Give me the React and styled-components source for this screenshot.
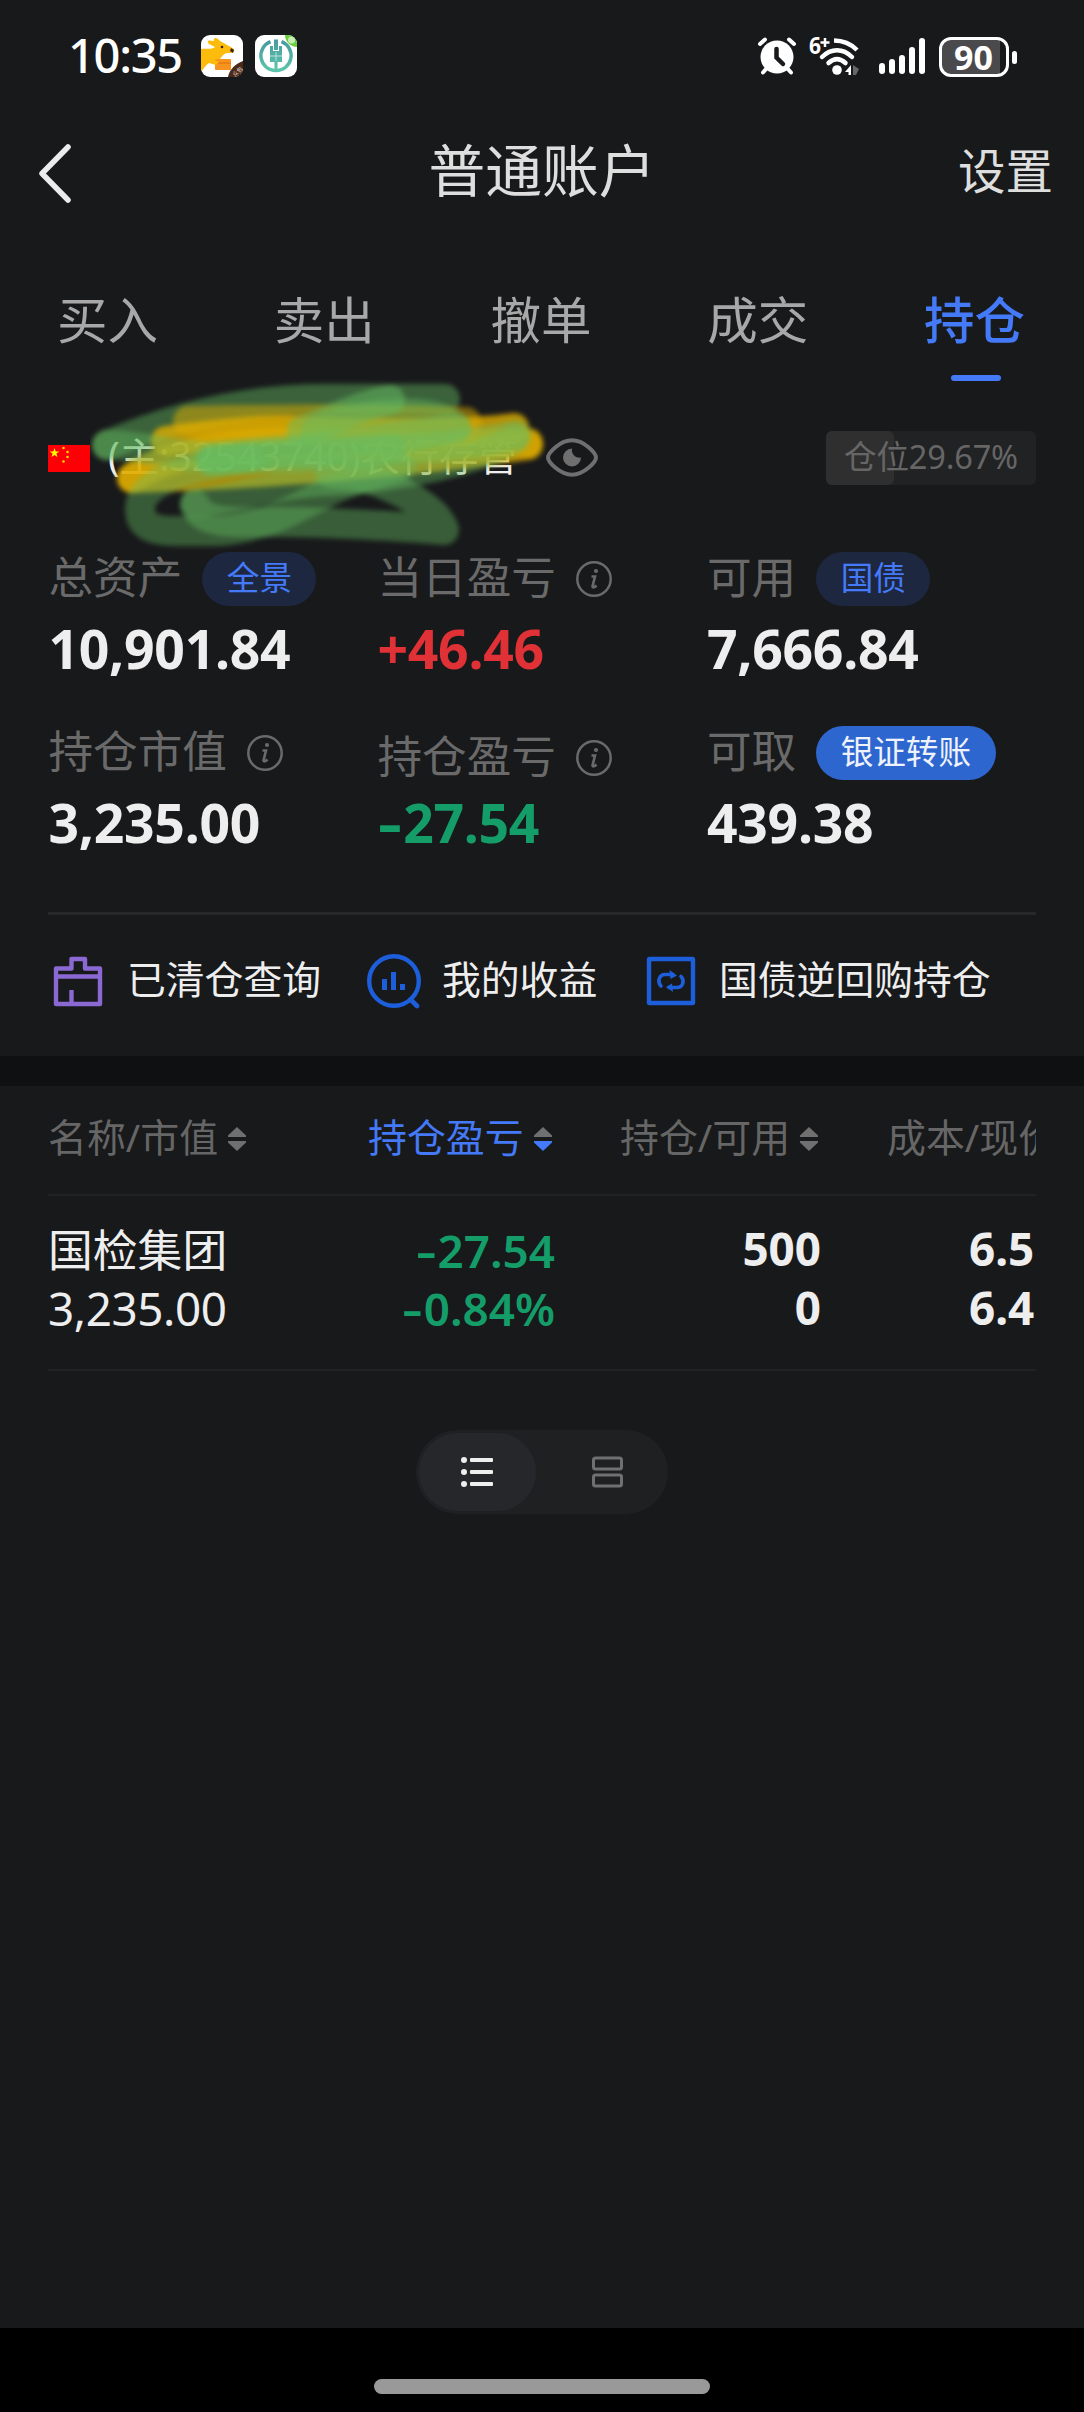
/* eslint-disable react/prop-types */
import styled, { createGlobalStyle } from "styled-components";

const GlobalStyle = createGlobalStyle`
  * {
    box-sizing: border-box;
  }

  body {
    margin: 0;
    background: #000;
    font-family: "Noto Sans", "Noto Sans CJK SC", sans-serif;
    color: #eee;
  }
`;

const Page = styled.div`
  display: flex;
  flex-direction: column;
  width: 1084px;
  height: 2412px;
  background: #18191b;
  overflow: hidden;
  white-space: nowrap;
`;

/* ---------- Status bar ---------- */

const StatusBar = styled.div`
  display: flex;
  align-items: center;
  height: 112px;
  padding: 0 67px 0 68px;
`;

const Time = styled.div`
  width: 133px;
  font-size: 47px;
  font-weight: 500;
  line-height: 60px;
  letter-spacing: -1.3px;
  transform: translateY(-1px);
  color: #fff;
`;

const AppIcons = styled.div`
  display: flex;
  gap: 12px;
  flex: 1;
`;

const StatusIcons = styled.div`
  display: flex;
  align-items: center;
`;

const Battery = styled.div`
  position: relative;
  display: flex;
  align-items: center;
  justify-content: center;
  width: 70px;
  height: 40px;
  margin: 2px 8px 0 14px;
  padding-right: 1px;
  border: 3px solid #fff;
  border-radius: 12px;
  background: linear-gradient(to right, #4a4a4c 90%, #18191b 90%);
  font-size: 34px;
  font-weight: 700;
  line-height: 34px;
  color: #fff;

  &::after {
    content: "";
    position: absolute;
    right: -11px;
    top: 11px;
    width: 5px;
    height: 13px;
    border-radius: 3px;
    background: #fff;
  }
`;

/* ---------- Header + tabs ---------- */

const Header = styled.div`
  display: grid;
  grid-template-columns: 1fr auto 1fr;
  align-items: center;
  height: 118px;
  padding: 0 31px 0 36px;
  color: #dedede;
`;

const Title = styled.div`
  margin-left: -5px;
  font-size: 56.8px;
  line-height: 70px;
  transform: translateY(-1px);
`;

const Settings = styled.div`
  justify-self: end;
  font-size: 47.5px;
  line-height: 60px;
`;

const Tabs = styled.div`
  display: grid;
  grid-template-columns: repeat(5, 1fr);
  height: 155px;
  padding-top: 60px;
`;

const Tab = styled.div`
  display: flex;
  flex-direction: column;
  align-items: center;
  gap: 25px;
  font-size: 50.5px;
  font-weight: ${({ $active }) => ($active ? 500 : 400)};
  line-height: 60px;
  color: ${({ $active }) => ($active ? "#447af7" : "#a8a8a8")};

  span {
    margin-right: 2px;
  }

  &::after {
    content: "";
    width: 50px;
    height: 6px;
    border-radius: 3px;
    background: ${({ $active }) => ($active ? "#447af7" : "transparent")};
  }
`;

/* ---------- Account ---------- */

const AccountRow = styled.div`
  position: relative;
  display: flex;
  align-items: center;
  height: 54px;
  margin: 46px 48px 67px;
`;

const AccountName = styled.div`
  width: 420px;
  margin: -4px 18px 0 18px;
  font-size: 39.2px;
  line-height: 54px;
  color: #eee;
`;

const Scribble = styled.svg`
  position: absolute;
  left: 42px;
  top: -56px;
`;

const Position = styled.div`
  width: 210px;
  height: 54px;
  margin-left: auto;
  border-radius: 6px;
  background: #212224;
  font-size: 32.6px;
  line-height: 51px;
  text-align: center;
  letter-spacing: -0.2px;
  color: #666;
`;

const PositionFill = styled.div`
  width: ${({ $width }) => $width};
  height: 54px;
  margin-bottom: -54px;
  border-radius: 6px;
  background: #2f2f30;
`;

const Stats = styled.div`
  display: grid;
  grid-template-columns: 329px 329.5px 1fr;
  row-gap: 47px;
  padding: 0 0 59px 48.5px;
`;

const StatLabel = styled.div`
  display: flex;
  align-items: center;
  gap: 20px;
  height: 54px;
  margin-top: ${({ $shift }) => $shift || 0};
  margin-bottom: ${({ $shift }) => ($shift ? `-${$shift}` : 0)};
  font-size: 44.6px;
  line-height: 50px;
  color: #6a6a6a;

  span {
    margin-top: -4px;
  }
`;

const StatValue = styled.div`
  margin-top: 13px;
  font-size: 53.5px;
  font-weight: 700;
  line-height: 60px;
  letter-spacing: -0.3px;
  color: ${({ $color }) => $color || "#eee"};
`;

// The hyphen of the font is short, numbers need a wider sign
const Sign = styled.span`
  display: inline-block;
  width: 0.48em;
  text-align: left;
  transform: scaleX(1.4);
  transform-origin: left center;
`;

const Pill = styled.div`
  height: 54px;
  padding: 0 24.5px;
  border-radius: 27px;
  background: ${({ $solid }) => ($solid ? "#2e66d0" : "#1e2740")};
  font-size: 32.6px;
  line-height: 51px;
  color: ${({ $solid }) => ($solid ? "#eef2fb" : "#447af7")};
`;

const Divider = styled.div`
  flex-shrink: 0;
  height: ${({ $height }) => $height};
  margin: 0 48px;
  background: ${({ $height }) => ($height === "3px" ? "#27282a" : "#212224")};
`;

const Shortcuts = styled.div`
  display: flex;
  align-items: center;
  height: 141px;
  padding: 0 0 9px 51px;
`;

const Shortcut = styled.div`
  display: flex;
  align-items: center;
  gap: 20px;
  width: ${({ $width }) => $width};
  font-size: 38.8px;
  line-height: 50px;
  color: #eee;

  span {
    margin-top: -5px;
  }
`;

const Band = styled.div`
  height: 30px;
  background: #0f1012;
`;

/* ---------- Holdings table ---------- */

const TableHead = styled.div`
  display: flex;
  align-items: center;
  height: 108px;
  margin: 0 48px;
  padding-bottom: 2px;
  overflow: hidden;
`;

const HeadCell = styled.div`
  display: flex;
  flex-shrink: 0;
  align-items: center;
  gap: 10px;
  width: ${({ $width }) => $width};
  font-size: 38.9px;
  line-height: 50px;
  color: ${({ $active }) => ($active ? "#447af7" : "#666")};

  span {
    margin-top: -4px;
  }
`;

const TableRow = styled.div`
  display: flex;
  height: 173px;
  margin: 0 48px;
  overflow: hidden;
`;

const Cell = styled.div`
  flex-shrink: 0;
  width: ${({ $width }) => $width};
  padding-top: ${({ $top }) => $top || "23px"};
  margin-right: ${({ $after }) => $after || 0};
  font-size: 45.8px;
  font-weight: ${({ $weight }) => $weight || 600};
  line-height: ${({ $line }) => $line || "59px"};
  text-align: ${({ $align }) => $align || "right"};
  color: ${({ $color }) => $color || "#eee"};
`;

const StockName = styled.div`
  font-size: 44.8px;
`;

const StockAmount = styled.div`
  letter-spacing: -0.4px;
`;

/* ---------- View switch + home bar ---------- */

const ViewSwitch = styled.div`
  display: flex;
  align-self: center;
  width: 252px;
  height: 84px;
  margin: 59px 0 auto;
  padding: 3px;
  border-radius: 42px;
  background: #1f2022;
`;

const ViewOption = styled.div`
  display: flex;
  align-items: center;
  justify-content: center;
  width: ${({ $active }) => ($active ? "117px" : "129px")};
  padding-left: ${({ $active }) => ($active ? 0 : "13px")};
  padding-right: ${({ $active }) => ($active ? "2px" : 0)};
  border-radius: 39px;
  background: ${({ $active }) => ($active ? "#26272b" : "transparent")};
`;

const HomeBar = styled.div`
  display: flex;
  justify-content: center;
  height: 84px;
  padding-top: 51px;
  background: #000;

  &::after {
    content: "";
    width: 336px;
    height: 15px;
    border-radius: 8px;
    background: #999;
  }
`;

/* ---------- Icons ---------- */

const KangarooIcon = () => (
  <svg width="42" height="42" viewBox="0 0 42 42">
    <defs>
      <clipPath id="kangaroo">
        <rect width="42" height="42" rx="9" />
      </clipPath>
    </defs>
    <g clipPath="url(#kangaroo)">
      <rect width="42" height="42" fill="#fff" />
      <path
        d="M0 14C5 13 10 15 14 12L8 9C5 5 8 5 13 6C12 2 16 2 19 6C23 8 28 11 33 14C34 18 31 18 26 18C22 19 21 22 18 25L16 30L8 28C3 31 3 35 0 36Z"
        fill="#fdbb0c"
      />
      <circle cx="21" cy="12" r="1.3" fill="#3c2415" />
      <path d="M30 13L33 15L32 18L29 16Z" fill="#3c2415" />
      <rect x="14" y="24" width="16" height="11" rx="1" fill="#f7931e" />
      <path d="M14 28H30" stroke="#e0700c" strokeWidth="1.2" />
      <path d="M12 24L18 27L15 30L9 28Z" fill="#fdbb0c" />
      <path d="M42 26C34 29 28 35 27 42H42Z" fill="#4c2a19" />
    </g>
    <text
      x="36.5"
      y="38.5"
      fontSize="5.5"
      textAnchor="middle"
      fill="#e8ddd5"
      transform="rotate(-45 36.5 36.5)"
    >
      众包
    </text>
  </svg>
);

const BankIcon = () => (
  <svg width="42" height="42" viewBox="0 0 42 42" fill="none">
    <defs>
      <linearGradient id="bank" x1="0" y1="0" x2="0" y2="1">
        <stop offset="0" stopColor="#469ba0" />
        <stop offset="1" stopColor="#5cc4ab" />
      </linearGradient>
      <clipPath id="bankClip">
        <rect width="42" height="42" rx="9" />
      </clipPath>
    </defs>
    <g clipPath="url(#bankClip)">
      <rect width="42" height="42" fill="#fff" />
      <path
        d="M15.5 6.6A15 15 0 0 0 21 35.6A15 15 0 0 0 26.5 6.6"
        stroke="url(#bank)"
        strokeWidth="3.4"
      />
      <path
        d="M15 11H18V16H24V11H27V27H22.5V35H19.5V27H15ZM19 4.5H23V15H19Z"
        fill="url(#bank)"
      />
      <path d="M15 21H27M21 17V26" stroke="#d6efe9" strokeWidth="0.8" />
      <path d="M30 0H42V12C36 12 30 7 30 0Z" fill="#69cf3f" />
      <circle cx="36.5" cy="5" r="3.5" fill="#c5f0b2" />
    </g>
  </svg>
);

const AlarmIcon = () => (
  <svg width="38" height="38" viewBox="0 0 38 38" strokeLinecap="round">
    <path
      d="M2 7L7 2.5M36 7L31 2.5M9 31L5 35.5M29 31L33 35.5"
      stroke="#fff"
      strokeWidth="4"
    />
    <circle cx="19" cy="20" r="16.5" fill="#fff" />
    <path
      d="M18.5 12V20.5L25 27"
      fill="none"
      stroke="#18191b"
      strokeWidth="4.5"
    />
  </svg>
);

const WifiBox = styled.div`
  display: flex;
  width: 52px;
  margin: 0 18px 0 13px;
`;

const WifiIcon = () => (
  <WifiBox>
    <svg
      width="52"
      height="42"
      viewBox="0 0 52 42"
      fill="none"
      stroke="#fff"
      strokeWidth="4.5"
      overflow="visible"
    >
      <path d="M25 5.5C34 5.5 42 9 48 15" />
      <path d="M13 22C22 13 34 13 43 22" strokeLinecap="round" />
      <path d="M19.5 28C25 23 31 23 36.5 28" strokeLinecap="round" />
      <circle cx="28" cy="35" r="4.8" fill="#fff" stroke="none" />
      <path d="M42 30V40H39.5V37H36Z" fill="#fff" stroke="none" />
      <path d="M44 30L50 34L47 40H44Z" fill="#666" stroke="none" />
      <path d="M16 3V12M11.5 7.5H20.5" strokeWidth="2.5" />
      <text
        x="0"
        y="19"
        fontSize="24"
        fontWeight="700"
        fill="#fff"
        stroke="none"
        textLength="12"
        lengthAdjust="spacingAndGlyphs"
      >
        6
      </text>
    </svg>
  </WifiBox>
);

const SignalIcon = () => (
  <svg width="46" height="36" viewBox="0 0 46 36" fill="#fff">
    <rect x="0" y="25" width="6" height="11" rx="3" />
    <rect x="10" y="21" width="6" height="15" rx="3" />
    <rect x="20" y="17" width="6" height="19" rx="3" />
    <rect x="30" y="9" width="6" height="27" rx="3" />
    <rect x="40" y="0" width="6" height="36" rx="3" />
  </svg>
);

const BackIcon = () => (
  <svg width="38" height="64" viewBox="0 0 38 64" fill="none">
    <path
      d="M32 8L6 34.5L32 61"
      stroke="#ececec"
      strokeWidth="5.5"
      strokeLinecap="round"
      strokeLinejoin="round"
    />
  </svg>
);

const starPoints = "0,-5 1.2,-1.6 4.8,-1.6 1.9,0.6 3,4 0,1.9 -3,4 -1.9,0.6 -4.8,-1.6 -1.2,-1.6";

const FlagIcon = () => (
  <svg width="42" height="27" viewBox="0 0 42 27">
    <rect width="42" height="27" fill="#fd0006" />
    <polygon points={starPoints} transform="translate(6.5 8)" fill="#ff0" />
    <g fill="#ffd400">
      <circle cx="15.5" cy="3" r="1.3" />
      <circle cx="19.5" cy="7" r="1.3" />
      <circle cx="19.5" cy="12" r="1.3" />
      <circle cx="15.5" cy="16.5" r="1.3" />
    </g>
  </svg>
);

const EyeIcon = () => (
  <svg width="52" height="40" viewBox="0 0 52 40" fill="none">
    <path
      d="M2 19.5C2 15 14 2.2 26 2.2C38 2.2 50 15 50 19.5C50 24 38 36.8 26 36.8C14 36.8 2 24 2 19.5Z"
      stroke="#6f6f6f"
      strokeWidth="4"
    />
    <path d="M26 10.5A9 9 0 1 0 35 19.5C30 20.5 25 16.5 26 10.5Z" fill="#6f6f6f" />
  </svg>
);

const InfoIcon = () => (
  <svg width="36" height="36" viewBox="0 0 36 36" fill="none">
    <circle cx="18" cy="18" r="16.7" stroke="#6a6a6a" strokeWidth="2.5" />
    <circle cx="20" cy="10" r="2.1" fill="#6a6a6a" />
    <path
      d="M15.5 15.5H19L16.5 25.5C16.5 27 18.5 26.5 20.5 24.5"
      stroke="#6a6a6a"
      strokeWidth="2.6"
    />
  </svg>
);

const ClearedIcon = () => (
  <svg width="56" height="56" viewBox="0 0 56 56" fill="none">
    <path
      d="M5 51V15.5H20.5V6H34V15.5H49V51ZM5 23.5H49M20.5 51V37"
      stroke="#8b69d3"
      strokeWidth="4.4"
      strokeLinejoin="round"
    />
  </svg>
);

const ProfitIcon = () => (
  <svg width="56" height="56" viewBox="0 0 56 56" fill="none">
    <circle cx="28" cy="28" r="24.8" stroke="#1d5edb" strokeWidth="4.4" />
    <path
      d="M44.5 46.5L51 53"
      stroke="#1d5edb"
      strokeWidth="4.6"
      strokeLinecap="round"
    />
    <path
      d="M18.5 26V37M27.5 19V37M36.5 31V37"
      stroke="#1d5edb"
      strokeWidth="5"
    />
  </svg>
);

const RepoIcon = () => (
  <svg width="56" height="56" viewBox="0 0 56 56" fill="none">
    <rect
      x="6"
      y="6"
      width="44"
      height="44"
      rx="0.5"
      stroke="#1d5edb"
      strokeWidth="4.4"
      strokeLinejoin="round"
    />
    <g stroke="#1d5edb" strokeWidth="3.6" strokeLinecap="round">
      <path d="M18 33C14 29 16 21.5 22 21.5H30" />
      <path d="M38 23.5C42 27.5 40 34.5 34 34.5H26" />
    </g>
    <path
      d="M26.5 17L34 22.5L27.5 26ZM30 39L23 34L29 30.5Z"
      fill="#1d5edb"
    />
  </svg>
);

const SortIcon = ({ active }) => (
  <svg width="18" height="24" viewBox="0 0 18 24">
    <path d="M9 0L18 8.5V10H0V8.5Z" fill="#707070" />
    <path d="M9 24L18 15.5V14H0V15.5Z" fill={active ? "#447af7" : "#707070"} />
  </svg>
);

const ListIcon = () => (
  <svg width="32" height="30" viewBox="0 0 32 30" fill="#eee">
    {[3, 15, 27].map((y) => (
      <g key={y}>
        <circle cx="3" cy={y} r="3" />
        <rect x="9" y={y - 2} width="23" height="4" rx="1" />
      </g>
    ))}
  </svg>
);

const CardsIcon = () => (
  <svg width="31" height="32" viewBox="0 0 31 32" fill="none">
    <rect x="1.5" y="2" width="28" height="11" rx="2" stroke="#707070" strokeWidth="3" />
    <rect x="1.5" y="19" width="28" height="11" rx="2" stroke="#707070" strokeWidth="3" />
  </svg>
);

const YELLOW_INK = "#e0ae00";
const GREEN_INK = "#66bd62";

// Marker strokes that hide the account number, in the order they were made
const strokes = [
  { d: "M17 70C60 52 140 24 233 24H355", ink: GREEN_INK, opacity: 0.45 },
  { d: "M98 46C190 44 300 44 376 47", ink: YELLOW_INK, opacity: 0.5 },
  { d: "M76 66C140 57 180 54 220 56S380 60 424 53", ink: YELLOW_INK, opacity: 0.8 },
  { d: "M42 103C90 70 170 64 280 70S420 64 438 68", ink: YELLOW_INK, opacity: 0.7 },
  { d: "M42 103C150 100 300 90 438 70", ink: YELLOW_INK, opacity: 0.75 },
  { d: "M300 25C270 30 240 46 212 56", ink: GREEN_INK, opacity: 0.5 },
  { d: "M226 56C280 34 350 32 366 54C340 64 260 78 120 84", ink: GREEN_INK, opacity: 0.42 },
  { d: "M366 52C300 66 200 74 120 82C80 80 50 70 17 70", ink: GREEN_INK, opacity: 0.42 },
  { d: "M426 60C340 80 240 72 122 84", ink: GREEN_INK, opacity: 0.45 },
  { d: "M300 74C250 82 180 82 122 86", ink: GREEN_INK, opacity: 0.45 },
  { d: "M160 84C80 94 50 112 50 134C50 150 62 156 84 156H130C180 152 210 130 244 114C270 102 290 98 310 92", ink: GREEN_INK, opacity: 0.4 },
  { d: "M105 128C150 122 190 108 240 106S380 90 424 64", ink: GREEN_INK, opacity: 0.42 },
  { d: "M105 130C112 148 140 148 183 147S320 152 354 155C348 136 320 120 290 108C270 100 258 100 240 98", ink: GREEN_INK, opacity: 0.42 },
];

const Ink = styled.g`
  fill: none;
  stroke-width: 30px;
  stroke-linecap: round;
  stroke-linejoin: round;
  filter: blur(2.5px);
`;

const MarkerScribble = () => (
  <Scribble width="480" height="190" viewBox="0 0 480 190">
    <Ink>
      {strokes.map(({ d, ink, opacity }) => (
        <path key={d} d={d} stroke={ink} strokeOpacity={opacity} />
      ))}
    </Ink>
  </Scribble>
);

const tabs = ["买入", "卖出", "撤单", "成交", "持仓"];

const GREEN = "#149d69";
const RED = "#e03236";

const App = () => {
  return (
    <>
      <GlobalStyle />
      <Page>
        <StatusBar>
          <Time>10:35</Time>
          <AppIcons>
            <KangarooIcon />
            <BankIcon />
          </AppIcons>
          <StatusIcons>
            <AlarmIcon />
            <WifiIcon />
            <SignalIcon />
            <Battery>90</Battery>
          </StatusIcons>
        </StatusBar>

        <Header>
          <BackIcon />
          <Title>普通账户</Title>
          <Settings>设置</Settings>
        </Header>

        <Tabs>
          {tabs.map((tab) => (
            <Tab key={tab} $active={tab === "持仓"}>
              <span>{tab}</span>
            </Tab>
          ))}
        </Tabs>

        <AccountRow>
          <FlagIcon />
          <AccountName>(主:32543740)农行存管</AccountName>
          <EyeIcon />
          <MarkerScribble />
          <Position>
            <PositionFill $width="68px" />
            仓位29.67%
          </Position>
        </AccountRow>

        <Stats>
          <div>
            <StatLabel>
              <span>总资产</span>
              <Pill>全景</Pill>
            </StatLabel>
            <StatValue>10,901.84</StatValue>
          </div>
          <div>
            <StatLabel>
              <span>当日盈亏</span>
              <InfoIcon />
            </StatLabel>
            <StatValue $color={RED}>+46.46</StatValue>
          </div>
          <div>
            <StatLabel>
              <span>可用</span>
              <Pill>国债</Pill>
            </StatLabel>
            <StatValue>7,666.84</StatValue>
          </div>
          <div>
            <StatLabel>
              <span>持仓市值</span>
              <InfoIcon />
            </StatLabel>
            <StatValue>3,235.00</StatValue>
          </div>
          <div>
            <StatLabel $shift="5px">
              <span>持仓盈亏</span>
              <InfoIcon />
            </StatLabel>
            <StatValue $color={GREEN}>
              <Sign>-</Sign>27.54
            </StatValue>
          </div>
          <div>
            <StatLabel>
              <span>可取</span>
              <Pill $solid>银证转账</Pill>
            </StatLabel>
            <StatValue>439.38</StatValue>
          </div>
        </Stats>

        <Divider $height="3px" />

        <Shortcuts>
          <Shortcut $width="315px">
            <ClearedIcon />
            <span>已清仓查询</span>
          </Shortcut>
          <Shortcut $width="277px">
            <ProfitIcon />
            <span>我的收益</span>
          </Shortcut>
          <Shortcut>
            <RepoIcon />
            <span>国债逆回购持仓</span>
          </Shortcut>
        </Shortcuts>

        <Band />

        <TableHead>
          <HeadCell $width="320px">
            <span>名称/市值</span>
            <SortIcon />
          </HeadCell>
          <HeadCell $width="252px" $active>
            <span>持仓盈亏</span>
            <SortIcon active />
          </HeadCell>
          <HeadCell $width="267px">
            <span>持仓/可用</span>
            <SortIcon />
          </HeadCell>
          <HeadCell>
            <span>成本/现价</span>
            <SortIcon />
          </HeadCell>
        </TableHead>

        <Divider $height="2px" />

        <TableRow>
          <Cell $width="290px" $align="left" $weight={400} $top="24px">
            <StockName>国检集团</StockName>
            <StockAmount>3,235.00</StockAmount>
          </Cell>
          <Cell $width="217px" $color={GREEN} $line="58px" $top="25px">
            <div>
              <Sign>-</Sign>27.54
            </div>
            <div>
              <Sign>-</Sign>0.84%
            </div>
          </Cell>
          <Cell $width="266px" $after="148px" $weight={700}>
            <div>500</div>
            <div>0</div>
          </Cell>
          <Cell $align="left" $weight={700}>
            <div>6.5</div>
            <div>6.4</div>
          </Cell>
        </TableRow>

        <Divider $height="2px" />

        <ViewSwitch>
          <ViewOption $active>
            <ListIcon />
          </ViewOption>
          <ViewOption>
            <CardsIcon />
          </ViewOption>
        </ViewSwitch>

        <HomeBar />
      </Page>
    </>
  );
};

export default App;
